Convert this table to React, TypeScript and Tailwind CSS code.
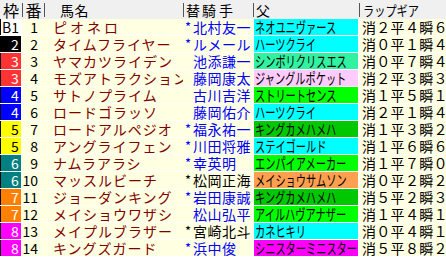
const WAKU: Record<number, string> = {
  1: "bg-white text-black",
  2: "bg-black text-white",
  3: "bg-[#ff3333] text-white",
  4: "bg-[#0000ff] text-white",
  5: "bg-[#ffff00] text-black",
  6: "bg-[#008080] text-white",
  7: "bg-[#ff8000] text-white",
  8: "bg-[#ff00ff] text-white",
};

const CYAN = "bg-[#00ffff]";
const LIME = "bg-[#00ff00]";
const KING = "bg-[#00c800]";

const ROWS = [
  { waku: 1, no: 1, name: "ピオネロ", wide: true, mark: true, jockey: "北村友一", blue: true, sire: "ネオユニヴァース", sireBg: CYAN, gear: "消２平４瞬６" },
  { waku: 2, no: 2, name: "タイムフライヤー", mark: true, jockey: "ルメール", blue: true, sire: "ハーツクライ", sireBg: CYAN, gear: "消０平１瞬４" },
  { waku: 3, no: 3, name: "ヤマカツライデン", mark: false, jockey: "池添謙一", blue: true, sire: "シンボリクリスエス", sireBg: "bg-[#30f2a0]", gear: "消０平７瞬４" },
  { waku: 3, no: 4, name: "モズアトラクション", mark: false, jockey: "藤岡康太", blue: true, sire: "ジャングルポケット", sireBg: "bg-[#ffccff]", gear: "消２平３瞬３" },
  { waku: 4, no: 5, name: "サトノプライム", mark: false, jockey: "古川吉洋", blue: true, sire: "ストリートセンス", sireBg: LIME, gear: "消１平５瞬１" },
  { waku: 4, no: 6, name: "ロードゴラッソ", mark: false, jockey: "藤岡佑介", blue: true, sire: "ハーツクライ", sireBg: CYAN, gear: "消２平１瞬４" },
  { waku: 5, no: 7, name: "ロードアルペジオ", mark: true, jockey: "福永祐一", blue: true, sire: "キングカメハメハ", sireBg: KING, gear: "消１平３瞬２" },
  { waku: 5, no: 8, name: "アングライフェン", mark: true, jockey: "川田将雅", blue: true, sire: "ステイゴールド", sireBg: CYAN, gear: "消１平６瞬６" },
  { waku: 6, no: 9, name: "ナムラアラシ", mark: true, jockey: "幸英明", blue: true, sire: "エンパイアメーカー", sireBg: LIME, gear: "消１平７瞬０" },
  { waku: 6, no: 10, name: "マッスルビーチ", mark: true, jockey: "松岡正海", blue: false, sire: "メイショウサムソン", sireBg: "bg-[#ff9f4f]", gear: "消０平２瞬２" },
  { waku: 7, no: 11, name: "ジョーダンキング", mark: true, jockey: "岩田康誠", blue: true, sire: "キングカメハメハ", sireBg: KING, gear: "消５平２瞬３" },
  { waku: 7, no: 12, name: "メイショウワザシ", mark: false, jockey: "松山弘平", blue: true, sire: "アイルハヴアナザー", sireBg: LIME, gear: "消１平４瞬１" },
  { waku: 8, no: 13, name: "メイプルブラザー", mark: true, jockey: "宮崎北斗", blue: false, sire: "カネヒキリ", sireBg: CYAN, gear: "消０平４瞬１" },
  { waku: 8, no: 14, name: "キングズガード", mark: true, jockey: "浜中俊", blue: true, sire: "シニスターミニスター", sireBg: "bg-[#ff00ff]", gear: "消５平８瞬２" },
];

function Sep() {
  return <span className="h-[14px] w-px shrink-0 bg-[#555]" />;
}

export default function App() {
  return (
    <div className="w-[446px] h-[257px] overflow-hidden bg-[#ffffe2] font-['Noto_Sans_CJK_JP',sans-serif] text-black leading-[16px]">
      {/* header */}
      <div className="flex h-[19px] items-center bg-[#f0f0f0] text-[14px]">
        <div className="flex w-[22px] justify-center text-[16px]">枠</div>
        <Sep />
        <div className="flex w-[21px] justify-center text-[16px]">番</div>
        <Sep />
        <div className="w-[138px] pl-[15px] tracking-[0.5px]">馬名</div>
        <Sep />
        <div className="w-[69px] pl-[2px]">替<span className="ml-[2px] tracking-[3px]">騎手</span></div>
        <Sep />
        <div className="w-[105px] pl-[2px]">父</div>
        <Sep />
        <div className="flex-1 overflow-hidden whitespace-nowrap pl-[3px]">
          <span className="inline-block origin-left scale-x-[0.8]">ラップギア</span>
        </div>
      </div>

      {ROWS.map((r) => (
        <div key={r.no} className="flex h-[17px] border-b border-white text-[14px]">
          <div className={`flex w-[22px] items-center border-l border-r border-black border-r-white ${WAKU[r.waku]} ${r.no === 1 ? "pl-[1px]" : "pl-[10px]"}`}>
            {r.no === 1 ? "B1" : r.waku}
          </div>
          <div className="flex w-[22px] items-center justify-end pr-[6px]">{r.no}</div>
          <div className={`flex w-[139px] items-center overflow-hidden whitespace-nowrap pl-[9px] text-[#800000] ${r.wide ? "tracking-[3px]" : "tracking-[1px]"}`}>
            {r.name}
          </div>
          <div className={`flex w-[70px] items-center overflow-hidden whitespace-nowrap pl-[2px] ${r.blue ? "text-[#0000ff]" : "text-black"}`}>
            <span className="w-[8px] shrink-0 text-[13px]">{r.mark ? "*" : ""}</span>
            <span className="tracking-[0.5px]">{r.jockey}</span>
          </div>
          <div className={`flex w-[106px] items-center overflow-hidden whitespace-nowrap border-l border-r border-white pl-[1px] ${r.sireBg}`}>
            <span className="inline-block origin-left scale-x-[0.68] text-[15px]">{r.sire}</span>
          </div>
          <div className="flex flex-1 items-center overflow-hidden whitespace-nowrap pl-[3px] tracking-[0.3px]">{r.gear}</div>
        </div>
      ))}
    </div>
  );
}
